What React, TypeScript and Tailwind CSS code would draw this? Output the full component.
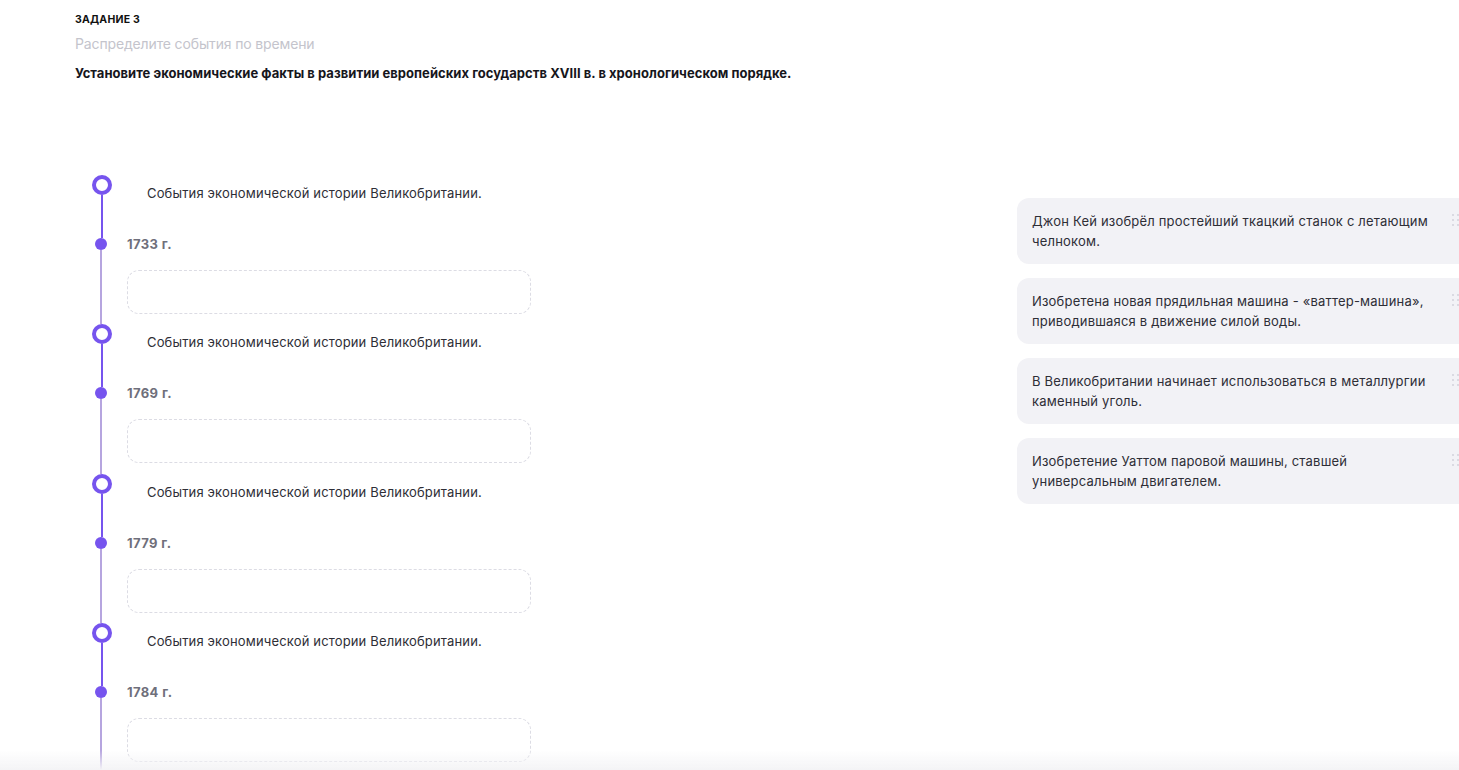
const YEARS = ["1733 г.", "1769 г.", "1779 г.", "1784 г."];

const FACTS = [
  "Джон Кей изобрёл простейший ткацкий станок с летающим челноком.",
  "Изобретена новая прядильная машина - «ваттер-машина», приводившаяся в движение силой воды.",
  "В Великобритании начинает использоваться в металлургии каменный уголь.",
  "Изобретение Уаттом паровой машины, ставшей универсальным двигателем.",
];

function Grip() {
  return (
    <svg width="7" height="12" viewBox="0 0 7 12" className="shrink-0 text-[#dadae2]">
      {[1, 6, 11].map((y) => (
        <g key={y}>
          <rect x="0" y={y - 1} width="2" height="2" fill="currentColor" />
          <rect x="5" y={y - 1} width="2" height="2" fill="currentColor" />
        </g>
      ))}
    </svg>
  );
}

function Section({ year }: { year: string }) {
  return (
    <div className="flex">
      <div className="flex w-6 shrink-0 flex-col items-center">
        <div className="h-5 w-5 shrink-0 rounded-full border-[4px] border-[#7654ee] bg-white" />
        <div className="h-[43px] w-[2px] bg-[#7654ee]" />
        <div className="-ml-[2px] h-3 w-3 shrink-0 rounded-full bg-[#7654ee]" />
        <div className="-ml-[2px] h-[74.4px] w-[2px] bg-[#b6a5df]" />
      </div>
      <div className="ml-[13px] w-[404px]">
        <div className="mt-2 pl-5 text-[13px] leading-5 tracking-[0.012em] text-[#2e2e36]">
          События экономической истории Великобритании.
        </div>
        <div className="mt-[31px] text-[13px] font-bold leading-5 tracking-[0.03em] text-[#6f6f7b]">{year}</div>
        <div className="mt-4 h-11 rounded-xl border border-dashed border-[#dcdce4] bg-white" />
      </div>
    </div>
  );
}

export default function App() {
  return (
    <div
      className="relative min-h-screen overflow-hidden bg-white text-[#1c1c22]"
      style={{ fontFamily: "Inter, 'Noto Sans', sans-serif" }}
    >
      <header className="pl-[75px] pt-[13px]">
        <div className="text-[10.5px] font-bold uppercase leading-[14px] tracking-[0.02em] text-[#111]">Задание 3</div>
        <div className="mt-[7px] text-[14px] leading-5 tracking-[-0.01em] text-[#c4c4cc]">Распределите события по времени</div>
        <div className="mt-[11px] text-[13px] font-bold leading-4 tracking-[0.003em] text-[#16161c]">
          Установите экономические факты в развитии европейских государств XVIII в. в хронологическом порядке.
        </div>
      </header>

      <main className="flex pl-[90px] pt-[94px]">
        <div className="flex flex-col">
          {YEARS.map((y) => (
            <Section key={y} year={y} />
          ))}
        </div>

        <div className="ml-[486px] mt-[23px] flex w-[470px] shrink-0 flex-col gap-[14px]">
          {FACTS.map((f) => (
            <div key={f} className="flex h-[66px] items-start gap-5 rounded-xl bg-[#f2f2f6] pl-[15px] pr-[18px] pt-[13px]">
              <p className="w-[400px] text-[13px] leading-5 tracking-[0.015em] text-[#2e2e36]">{f}</p>
              <div className="mt-[3px]">
                <Grip />
              </div>
            </div>
          ))}
        </div>
      </main>

      <div className="pointer-events-none fixed inset-x-0 bottom-0 h-5 bg-gradient-to-b from-white/0 to-[#f4f4f6]" />
    </div>
  );
}
